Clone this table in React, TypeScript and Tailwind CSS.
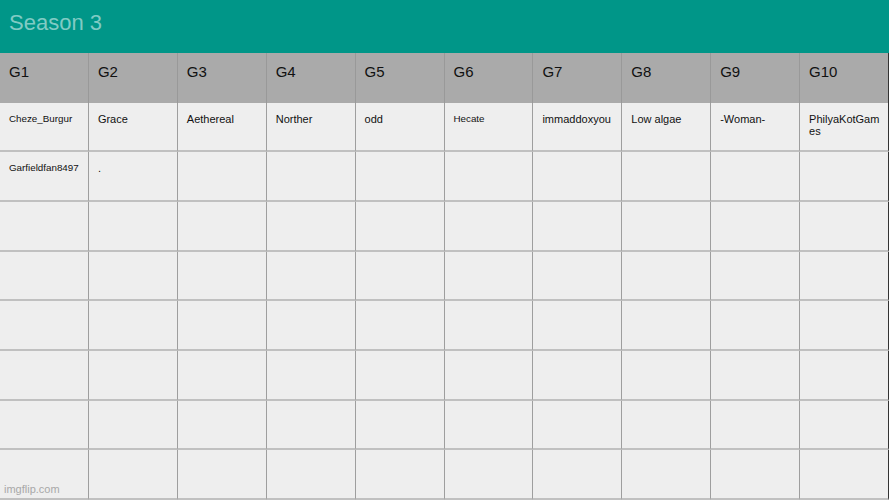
import React from "react";

const headers = ["G1", "G2", "G3", "G4", "G5", "G6", "G7", "G8", "G9", "G10"];
type Cell = { t: string; small?: boolean };
const row1: Cell[] = [
  { t: "Cheze_Burgur", small: true },
  { t: "Grace" },
  { t: "Aethereal" },
  { t: "Norther" },
  { t: "odd" },
  { t: "Hecate", small: true },
  { t: "immaddoxyou" },
  { t: "Low algae" },
  { t: "-Woman-" },
  { t: "PhilyaKotGam es" },
];
const row2: Cell[] = [
  { t: "Garfieldfan8497", small: true },
  { t: "." },
  ...Array.from({ length: 8 }, () => ({ t: "" })),
];
const empty: Cell[] = Array.from({ length: 10 }, () => ({ t: "" }));
const rows: Cell[][] = [row1, row2, empty, empty, empty, empty, empty, empty];

export default function App() {
  return (
    <div
      className="relative w-[889px] h-[500px] flex flex-col overflow-hidden bg-[#eeeeee]"
      style={{ fontFamily: '"Liberation Sans", Arial, sans-serif' }}
    >
      <div className="h-[53px] bg-[#009688] flex items-center pl-[9px] pb-[8px]">
        <span className="text-[22px] text-[#80cbc4]">Season 3</span>
      </div>
      <div className="flex-1 grid grid-cols-10 grid-rows-9">
        {headers.map((h, i) => (
          <div
            key={h}
            className={`bg-[#aaaaaa] pl-[9px] pt-[8px] text-[15px] text-[#111] border-r ${
              i === 9 ? "border-[#333]" : "border-[#999]"
            }`}
          >
            {h}
          </div>
        ))}
        {rows.map((r, ri) =>
          r.map((c, ci) => (
            <div
              key={`${ri}-${ci}`}
              className={`bg-[#eeeeee] border-b-2 border-b-[#c0c0c0] border-r ${
                ci === 9 ? "border-r-[#333]" : "border-r-[#9e9e9e]"
              } pl-[9px] pr-[6px] text-[#111] leading-[12px] break-all ${
                c.small ? "pt-[10px] text-[9.8px]" : "pt-[10px] text-[11px]"
              }`}
            >
              {c.t === "PhilyaKotGam es" ? (
                <span>
                  PhilyaKotGam
                  <br />
                  es
                </span>
              ) : (
                c.t
              )}
            </div>
          ))
        )}
      </div>
      <div className="absolute left-[4px] bottom-[3px] text-[11px] text-[#a8a8a8]">imgflip.com</div>
    </div>
  );
}
